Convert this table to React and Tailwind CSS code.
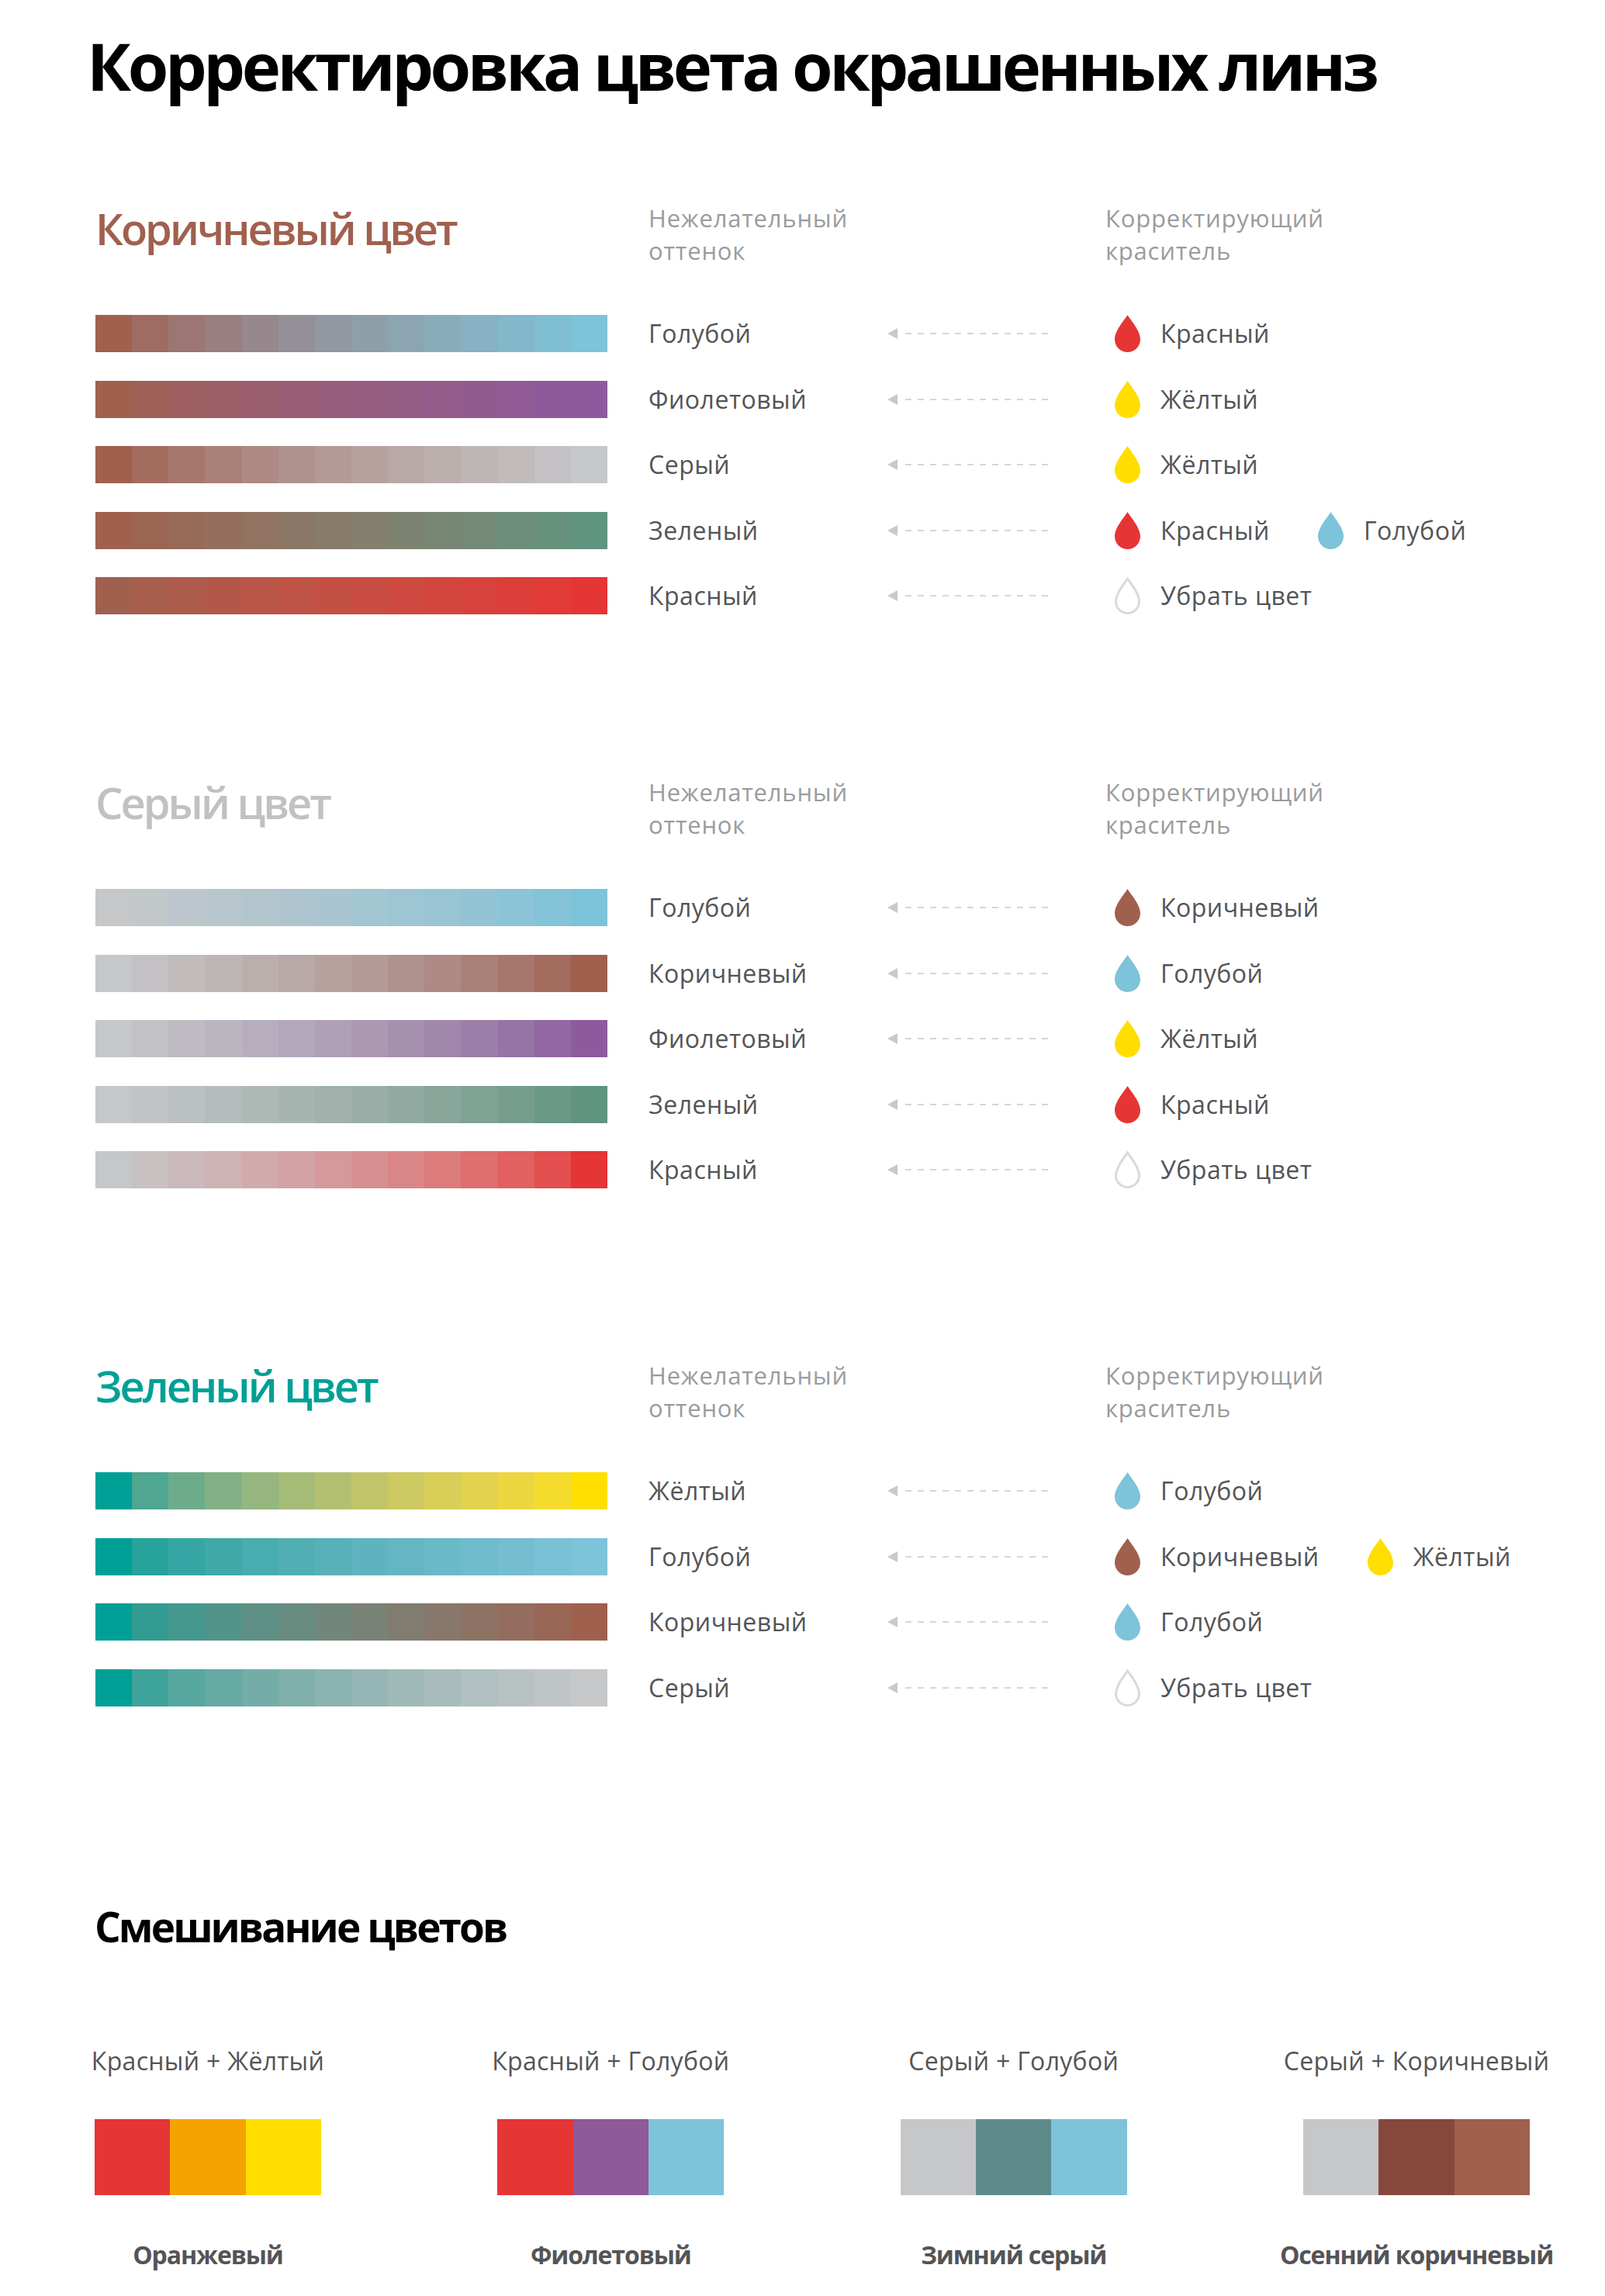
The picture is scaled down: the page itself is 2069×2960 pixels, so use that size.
const DROP = {
  red: '#e53535',
  yellow: '#ffde00',
  blue: '#7dc3d9',
  brown: '#a0604e',
};

const sections = [
  {
    title: 'Коричневый цвет',
    color: '#a0604e',
    start: '#a0604e',
    top: 'mt-[133px]',
    rows: [
      { end: '#7dc3d9', label: 'Голубой', fix: [['red', 'Красный']] },
      { end: '#8e5a9e', label: 'Фиолетовый', fix: [['yellow', 'Жёлтый']] },
      { end: '#c6c7c9', label: 'Серый', fix: [['yellow', 'Жёлтый']] },
      { end: '#5f9480', label: 'Зеленый', fix: [['red', 'Красный'], ['blue', 'Голубой']] },
      { end: '#e53535', label: 'Красный', fix: [['none', 'Убрать цвет']] },
    ],
  },
  {
    title: 'Серый цвет',
    color: '#c0c1c3',
    start: '#c6c7c9',
    top: 'mt-[208px]',
    rows: [
      { end: '#7dc3d9', label: 'Голубой', fix: [['brown', 'Коричневый']] },
      { end: '#a0604e', label: 'Коричневый', fix: [['blue', 'Голубой']] },
      { end: '#8e5a9e', label: 'Фиолетовый', fix: [['yellow', 'Жёлтый']] },
      { end: '#5f9480', label: 'Зеленый', fix: [['red', 'Красный']] },
      { end: '#e53535', label: 'Красный', fix: [['none', 'Убрать цвет']] },
    ],
  },
  {
    title: 'Зеленый цвет',
    color: '#00a096',
    start: '#00a096',
    top: 'mt-[220px]',
    rows: [
      { end: '#ffdf00', label: 'Жёлтый', fix: [['blue', 'Голубой']] },
      { end: '#7dc3d9', label: 'Голубой', fix: [['brown', 'Коричневый'], ['yellow', 'Жёлтый']] },
      { end: '#a0604e', label: 'Коричневый', fix: [['blue', 'Голубой']] },
      { end: '#c6c7c9', label: 'Серый', fix: [['none', 'Убрать цвет']] },
    ],
  },
];

const mixes = [
  { label: 'Красный + Жёлтый', colors: ['#e53535', '#f5a300', '#ffde00'], result: 'Оранжевый' },
  { label: 'Красный + Голубой', colors: ['#e53535', '#8e5a9a', '#7dc3d9'], result: 'Фиолетовый' },
  { label: 'Серый + Голубой', colors: ['#c6c7c9', '#5f8a8a', '#7dc3d9'], result: 'Зимний серый' },
  { label: 'Серый + Коричневый', colors: ['#c6c7c9', '#86483c', '#a0604e'], result: 'Осенний коричневый' },
];

function hex(c) {
  return [1, 3, 5].map((i) => parseInt(c.slice(i, i + 2), 16) / 255);
}

// blend in linear light, the bars look smoother that way
function mix(a, b, t) {
  const x = hex(a).map((v) => Math.pow(v, 2.2));
  const y = hex(b).map((v) => Math.pow(v, 2.2));
  const r = x.map((v, i) => Math.round(Math.pow(v + (y[i] - v) * t, 1 / 2.2) * 255));
  return `rgb(${r[0]}, ${r[1]}, ${r[2]})`;
}

function Drop({ kind }) {
  if (kind === 'none') {
    return (
      <svg width="33" height="48" viewBox="0 0 33 48" className="shrink-0">
        <path
          d="M16.5 2 C13 7.5 1.5 20 1.5 31.5 C1.5 39.8 8.2 46.5 16.5 46.5 C24.8 46.5 31.5 39.8 31.5 31.5 C31.5 20 20 7.5 16.5 2 Z"
          fill="none"
          stroke="#d9dadc"
          strokeWidth="3"
        />
      </svg>
    );
  }
  return (
    <svg width="33" height="48" viewBox="0 0 33 48" className="shrink-0">
      <path
        d="M16.5 0 C13 6 0 20 0 31.5 C0 40.6 7.4 48 16.5 48 C25.6 48 33 40.6 33 31.5 C33 20 20 6 16.5 0 Z"
        fill={DROP[kind]}
      />
    </svg>
  );
}

function Arrow() {
  return (
    <svg width="213" height="14" viewBox="0 0 213 14" className="shrink-0">
      <polygon points="0,7 13,0 13,14" fill="#c9c9cb" />
      <line x1="23" y1="7" x2="213" y2="7" stroke="#d6d6d8" strokeWidth="2" strokeDasharray="8 8" />
    </svg>
  );
}

function Bar({ start, end }) {
  return (
    <div className="flex h-[48px] w-[660px] shrink-0">
      {Array.from({ length: 14 }).map((_, i) => (
        <div key={i} className="h-full flex-1" style={{ background: mix(start, end, i / 13) }} />
      ))}
    </div>
  );
}

function Section({ s }) {
  return (
    <section className={`${s.top} pl-[123px]`}>
      <div className="flex items-start">
        <h2
          className="mt-[6px] w-[713px] shrink-0 text-[56px] font-semibold leading-[56px] tracking-[-3px]"
          style={{ color: s.color }}
        >
          {s.title}
        </h2>
        <div className="w-[589px] shrink-0 text-[31px] leading-[42px] tracking-[0.8px] text-[#9b9b9d]">
          Нежелательный
          <br />
          оттенок
        </div>
        <div className="text-[31px] leading-[42px] tracking-[0.8px] text-[#9b9b9d]">
          Корректирующий
          <br />
          краситель
        </div>
      </div>
      <div className="mt-[62px] flex flex-col gap-[36.5px]">
        {s.rows.map((r, i) => (
          <div key={i} className="flex h-[48px] items-center">
            <Bar start={s.start} end={r.end} />
            <div className="ml-[53px] w-[308px] shrink-0 text-[32px] tracking-[0.5px] text-[#545456]">
              {r.label}
            </div>
            <Arrow />
            <div className="ml-[80px] flex items-center">
              {r.fix.map(([kind, name], j) => (
                <div key={j} className={`flex items-center gap-[26px] ${j > 0 ? 'ml-[62px]' : ''}`}>
                  <Drop kind={kind} />
                  <span className="text-[32px] tracking-[0.5px] text-[#545456]">{name}</span>
                </div>
              ))}
            </div>
          </div>
        ))}
      </div>
    </section>
  );
}

export default function App() {
  return (
    <div className="min-h-[2960px] w-[2069px] bg-white pt-[42px] font-['Open_Sans','Noto_Sans',sans-serif]">
      <h1 className="pl-[112px] text-[85px] font-bold leading-[85px] tracking-[-4.4px] text-black">
        Корректировка цвета окрашенных линз
      </h1>

      {sections.map((s, i) => (
        <Section key={i} s={s} />
      ))}

      <section className="mt-[257px] pl-[122px] pr-[97px]">
        <h2 className="text-[53px] font-bold leading-[53px] tracking-[-2.9px] text-black">Смешивание цветов</h2>
        <div className="mt-[131px] flex justify-between">
          {mixes.map((m, i) => (
            <div key={i} className="flex w-[292px] flex-col items-center">
              <div className="whitespace-nowrap text-[32px] leading-[32px] tracking-[0.3px] text-[#545456]">
                {m.label}
              </div>
              <div className="mt-[59px] grid h-[98px] w-[292px] grid-cols-3">
                {m.colors.map((c, j) => (
                  <div key={j} style={{ background: c }} />
                ))}
              </div>
              <div className="mt-[61px] whitespace-nowrap text-[32px] font-bold leading-[32px] tracking-[-1.1px] text-[#545456]">
                {m.result}
              </div>
            </div>
          ))}
        </div>
      </section>
    </div>
  );
}
